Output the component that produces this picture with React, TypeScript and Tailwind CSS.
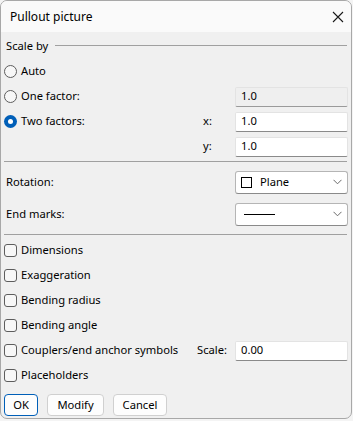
import React from "react";

const font = { fontFamily: '"Noto Sans", "Open Sans", sans-serif' };

const Radio = ({ checked }: { checked?: boolean }) =>
  checked ? (
    <span className="w-[13px] h-[13px] rounded-full bg-[#005fb8] flex items-center justify-center shrink-0">
      <span className="w-[5px] h-[5px] rounded-full bg-white" />
    </span>
  ) : (
    <span className="w-[13px] h-[13px] rounded-full border border-[#5d5d5d] bg-[#f7f7f7] shrink-0" />
  );

const Check = () => (
  <span className="w-[13px] h-[13px] rounded-[3px] border border-[#5d5d5d] bg-[#f7f7f7] shrink-0" />
);

const Field = ({ value, disabled }: { value: string; disabled?: boolean }) => (
  <div
    className={
      "w-[113px] h-[20px] flex items-center pl-[5px] rounded-[2px] border border-[#e3e3e3] " +
      (disabled ? "bg-[#efefef] border-b-[#9a9a9a]" : "bg-white border-b-[#8a8a8a]")
    }
  >
    {value}
  </div>
);

const Chevron = () => (
  <svg width="9" height="6" viewBox="0 0 9 6" className="shrink-0">
    <path d="M0.5 0.8 L4.5 4.8 L8.5 0.8" fill="none" stroke="#6a6a6a" strokeWidth="1" />
  </svg>
);

const CheckRow = ({ label, children }: { label: string; children?: React.ReactNode }) => (
  <div className="h-[25px] flex items-center">
    <div className="flex items-center gap-[4px] pl-[3px] flex-1">
      <Check />
      <span>{label}</span>
    </div>
    {children}
  </div>
);

export default function App() {
  return (
    <div className="w-[353px] h-[421px] bg-[#f4f4f4] text-[11.2px] text-black" style={font}>
      <div className="w-[352px] h-[419px] bg-[#f0f0f0] border border-[#a8a8a8] rounded-[7px] overflow-hidden flex flex-col">
        {/* title bar */}
        <div className="h-[31px] bg-[#fafafa] flex items-center justify-between pl-[9px] pr-[7px] shrink-0">
          <span className="text-[12px]">Pullout picture</span>
          <svg width="12" height="12" viewBox="0 0 12 12">
            <path d="M1 1 L11 11 M11 1 L1 11" stroke="#1a1a1a" strokeWidth="1.1" />
          </svg>
        </div>

        <div className="flex flex-col pt-[2px] pr-[3px]">
          {/* Scale by */}
          <div className="h-[25px] flex items-center pl-[5px] gap-[7px]">
            <span>Scale by</span>
            <div className="flex-1 h-px bg-[#a0a0a0] -mt-[2px] mr-[1px]" />
          </div>
          <div className="h-[25px] flex items-center gap-[4px] pl-[3px]">
            <Radio />
            <span>Auto</span>
          </div>
          <div className="h-[25px] flex items-center">
            <div className="flex items-center gap-[4px] pl-[3px] flex-1">
              <Radio />
              <span>One factor:</span>
            </div>
            <Field value="1.0" disabled />
          </div>
          <div className="h-[25px] flex items-center">
            <div className="flex items-center gap-[4px] pl-[3px] flex-1">
              <Radio checked />
              <span>Two factors:</span>
            </div>
            <span className="w-[32px]">x:</span>
            <Field value="1.0" />
          </div>
          <div className="h-[25px] flex items-center">
            <div className="flex-1" />
            <span className="w-[32px]">y:</span>
            <Field value="1.0" />
          </div>

          <div className="h-px bg-[#a0a0a0] mt-[2px] ml-[3px] mr-[1px]" />

          <div className="h-[32px] flex items-center mt-[4px]">
            <span className="flex-1 pl-[5px]">Rotation:</span>
            <div className="w-[113px] h-[23px] bg-white border border-[#b5b5b5] border-b-[#8a8a8a] rounded-[3px] flex items-center pl-[5px] pr-[5px]">
              <span className="w-[11px] h-[11px] border border-black shrink-0" />
              <span className="ml-[8px] flex-1">Plane</span>
              <Chevron />
            </div>
          </div>
          <div className="h-[32px] flex items-center">
            <span className="flex-1 pl-[5px]">End marks:</span>
            <div className="w-[113px] h-[23px] bg-white border border-[#b5b5b5] border-b-[#8a8a8a] rounded-[3px] flex items-center pl-[8px] pr-[5px]">
              <span className="w-[31px] h-px bg-black" />
              <span className="flex-1" />
              <Chevron />
            </div>
          </div>

          <div className="h-px bg-[#a0a0a0] mt-[4px] ml-[3px] mr-[1px]" />

          <div className="flex flex-col pt-[3px]">
            <CheckRow label="Dimensions" />
            <CheckRow label="Exaggeration" />
            <CheckRow label="Bending radius" />
            <CheckRow label="Bending angle" />
            <CheckRow label="Couplers/end anchor symbols">
              <span className="w-[38px]">Scale:</span>
              <Field value="0.00" />
            </CheckRow>
            <CheckRow label="Placeholders" />
          </div>

          <div className="flex items-center gap-[9px] pl-[3px] mt-[6px]">
            <button className="w-[34px] h-[22px] rounded-[4px] border border-[#005fb8] bg-[#fdfdfd]">OK</button>
            <button className="w-[57px] h-[22px] rounded-[4px] border border-[#d0d0d0] bg-[#fdfdfd]">Modify</button>
            <button className="w-[54px] h-[22px] rounded-[4px] border border-[#d0d0d0] bg-[#fdfdfd]">Cancel</button>
          </div>
        </div>
      </div>
    </div>
  );
}
